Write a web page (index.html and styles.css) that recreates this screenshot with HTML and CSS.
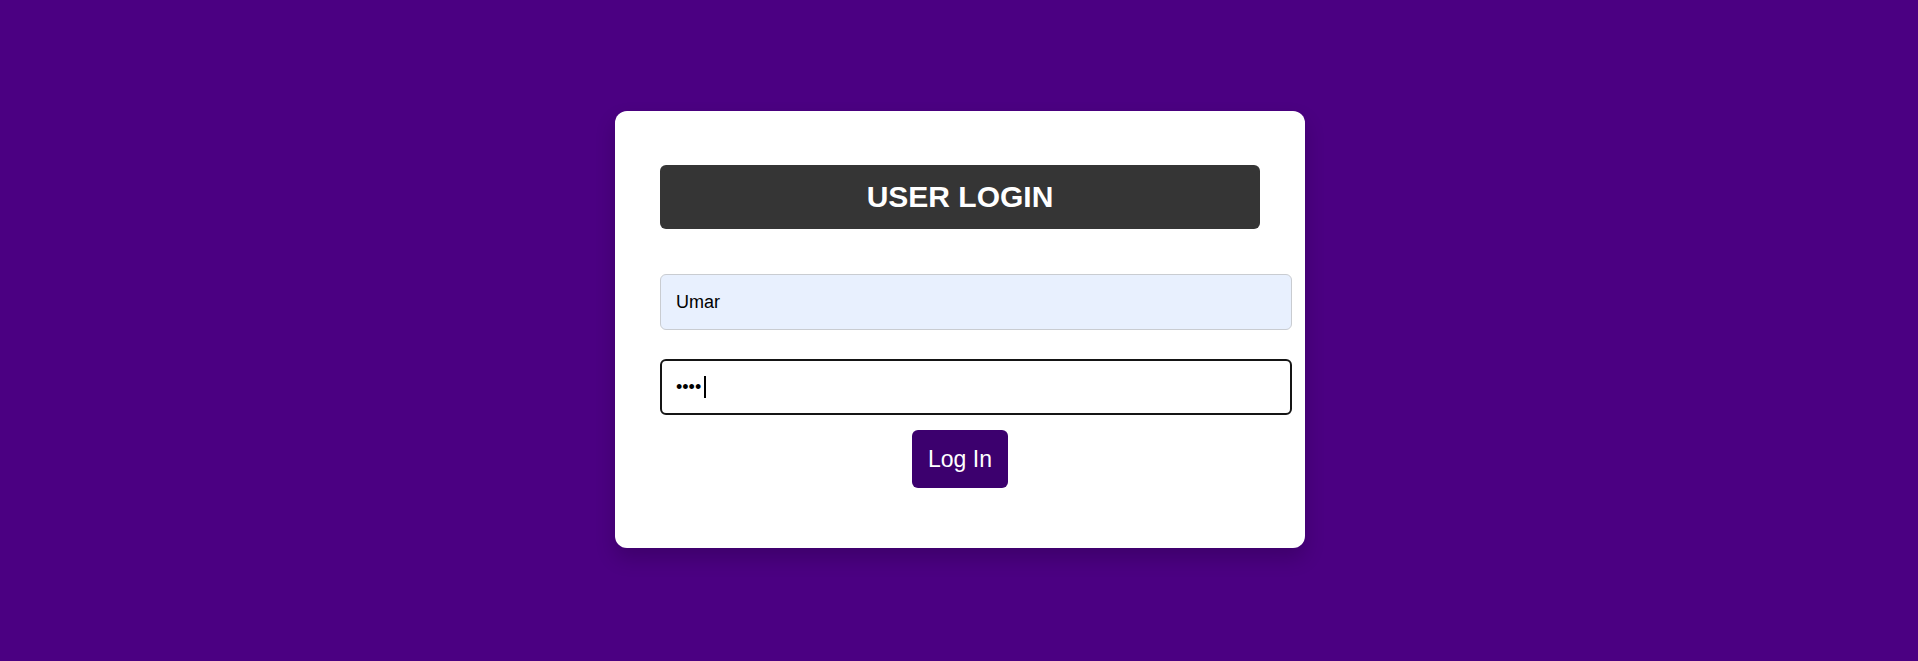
FILE: index.html
```html
<!DOCTYPE html>
<html lang="en">
<head>
<meta charset="utf-8">
<title>User Login</title>
<link rel="stylesheet" href="styles.css">
</head>
<body>
<main class="page">
  <form class="card">
    <h2 class="title">USER LOGIN</h2>
    <input class="field field-autofill" type="text" value="Umar">
    <div class="pw-wrap">
      <input class="field field-focus" type="password" value="1234">
      <span class="caret"></span>
    </div>
    <button class="btn" type="button">Log In</button>
  </form>
</main>
</body>
</html>
```
FILE: styles.css
```css
html, body {
  margin: 0;
  padding: 0;
}
body {
  background: #4b0082;
  font-family: "Liberation Sans", Arial, sans-serif;
}
.page {
  height: 661px;
  display: flex;
  align-items: center;
  justify-content: center;
  padding: 0 0 2px 2px;
  box-sizing: border-box;
}
.card {
  width: 690px;
  box-sizing: border-box;
  padding: 54px 45px 60px;
  background: #ffffff;
  border-radius: 12px;
  box-shadow: 0 10px 20px rgba(0, 0, 0, 0.18);
  display: flex;
  flex-direction: column;
  align-items: flex-start;
}
.title {
  margin: 0 0 45px;
  width: 600px;
  height: 64px;
  display: flex;
  align-items: center;
  justify-content: center;
  background: #353535;
  color: #ffffff;
  border-radius: 6px;
  font-size: 30px;
  font-weight: bold;
}
.field {
  display: block;
  width: 632px;
  height: 56px;
  box-sizing: border-box;
  margin: 0;
  padding: 0 15px;
  font-family: "Liberation Sans", Arial, sans-serif;
  font-size: 18px;
  color: #000;
  border-radius: 6px;
  outline: none;
}
.field-autofill {
  background: #e8f0fe;
  border: 1px solid #c9ccd1;
  margin-bottom: 29px;
}
.pw-wrap {
  position: relative;
  margin-bottom: 15px;
}
.field-focus {
  background: #ffffff;
  border: 2px solid #151515;
  padding-left: 14px;
  caret-color: transparent;
}
.caret {
  position: absolute;
  left: 44px;
  top: 17px;
  width: 2px;
  height: 22px;
  background: #000;
}
.btn {
  align-self: center;
  height: 58px;
  padding: 0 16px;
  border: none;
  border-radius: 6px;
  background: #3c006e;
  color: #ffffff;
  font-family: "Liberation Sans", Arial, sans-serif;
  font-size: 23px;
}
```
